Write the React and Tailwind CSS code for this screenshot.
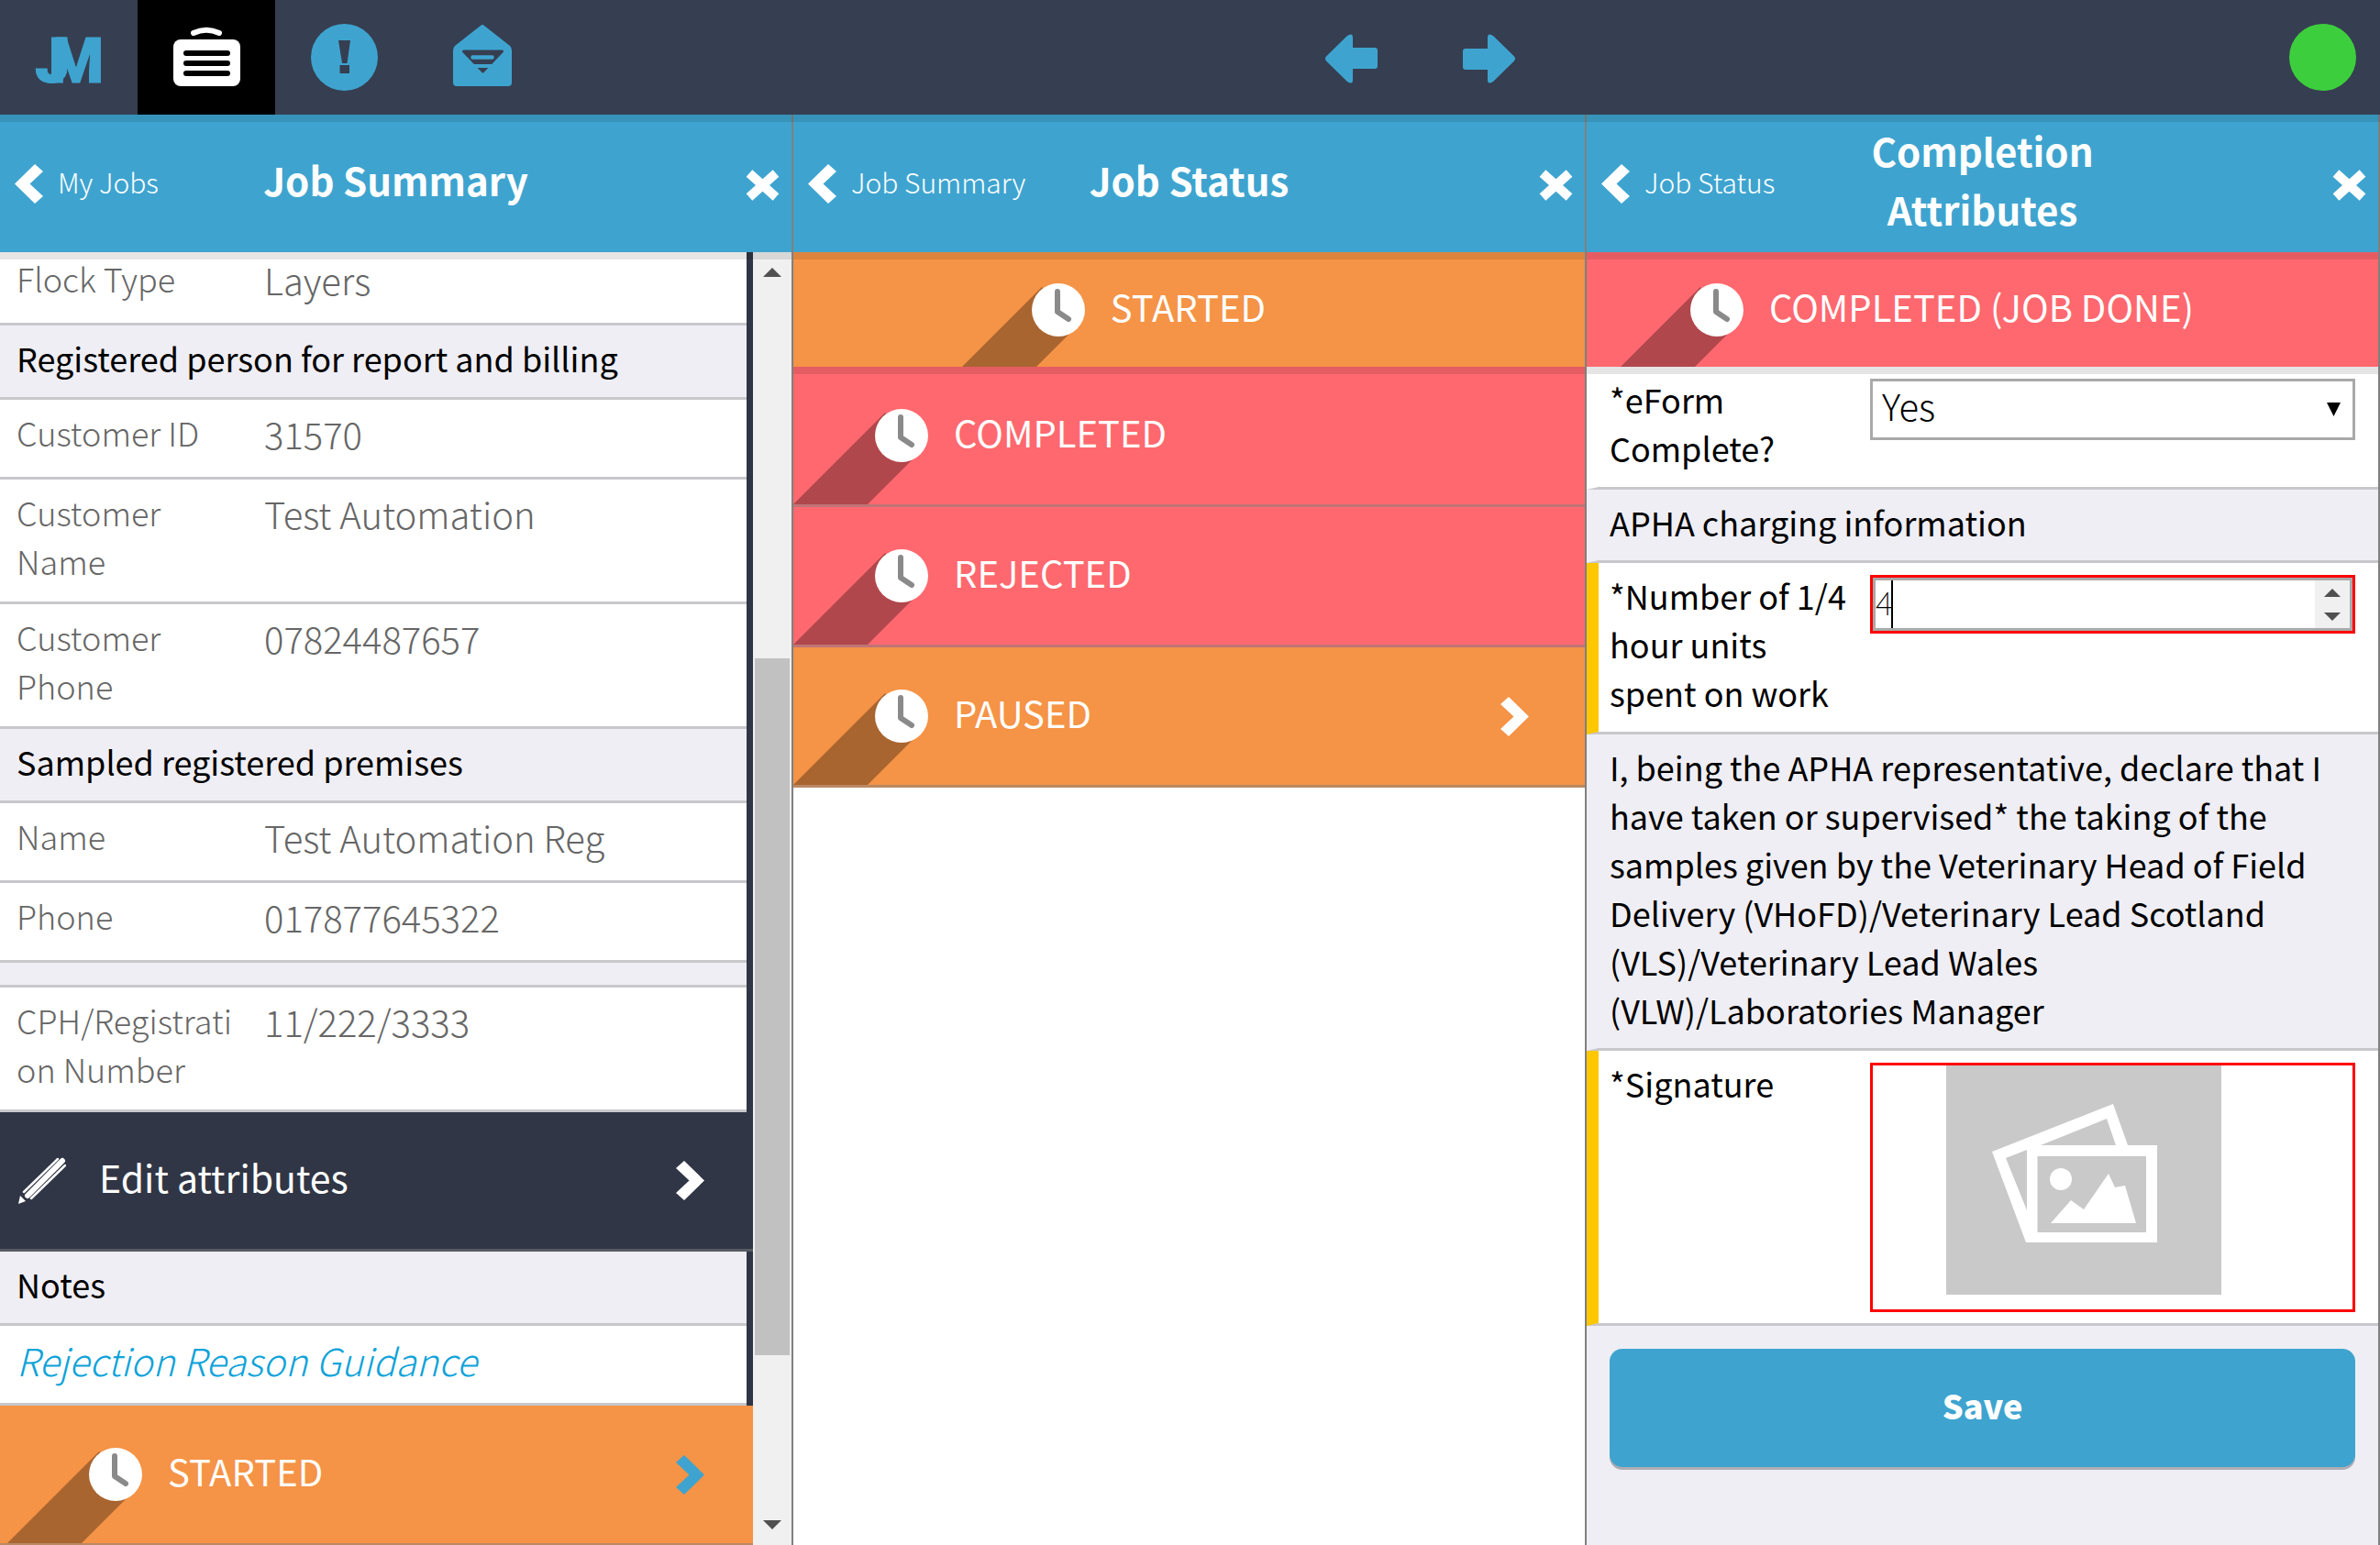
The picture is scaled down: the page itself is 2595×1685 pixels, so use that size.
const raised = "relative shadow-[0_8px_0_rgba(0,0,0,0.1)]";

function Chevron({ className = "" }) {
  return (
    <svg className={"h-[43px] w-[31px] shrink-0 " + className} viewBox="0 0 31 43" fill="currentColor" aria-hidden="true">
      <polygon points="9,0 31,21.5 9,43 0,35 14.5,21.5 0,8" />
    </svg>
  );
}

function ClockIcon() {
  return (
    <svg className="h-[150px] w-[147px] shrink-0" viewBox="-118 -75 147 150" aria-hidden="true">
      <polygon points="-118,75 -18,-25 22,16 -37,75" fill="#000" fillOpacity="0.31" />
      <circle r="29" fill="#fff" />
      <path d="M-1 -20 V2 L11 10" fill="none" stroke="#8a8a8a" strokeWidth="6" strokeLinecap="round" strokeLinejoin="round" />
    </svg>
  );
}

function PencilIcon() {
  return (
    <svg className="h-[52px] w-[52px] shrink-0" viewBox="0 0 52 52" aria-hidden="true">
      <polygon points="0,51 2,42 8,48" fill="#fff" />
      <g stroke="#fff" fill="none" strokeLinecap="round">
        <path d="M6 38 L43 2" strokeWidth="2.5" />
        <path d="M10 42 L48 4" strokeWidth="6" />
        <path d="M14 45 L51 9" strokeWidth="2.5" />
      </g>
    </svg>
  );
}

function PhotoPlaceholder() {
  return (
    <svg className="ml-20 block h-[250px] w-[300px]" viewBox="0 0 300 250" role="img" aria-label="No signature captured">
      <rect width="300" height="250" fill="#c9c9c9" />
      <path
        fill="#fff"
        fillRule="evenodd"
        d="M50 94 L182 42 L198 87 H230 V193 H87 Z M65 101 L88 92 V158 Z M103 87 L175 58 L185 87 Z M99.500 99 H218 V182 H99.500 Z"
      />
      <circle cx="125" cy="124" r="12" fill="#fff" />
      <polygon points="114,172 136,147 150,157 177,118 184,133 195,131 207,172" fill="#fff" />
    </svg>
  );
}

function ArrowIcon({ className = "" }) {
  return (
    <svg className={"h-[54px] w-[57px] " + className} viewBox="0 0 57 54" fill="currentColor">
      <path d="M1 24.500 L24 2 Q30 -2 30 4 V15 H54 Q57 15 57 18 V35 Q57 38 54 38 H30 V50 Q30 56 24 52 L1 29.500 Q-1 27 1 24.500 Z" />
    </svg>
  );
}

function TopBar() {
  const tab = "flex h-full w-[150px] items-center justify-center";
  return (
    <nav className={"z-30 flex h-[125px] shrink-0 items-center bg-[#363e51] text-[#3ea4cf] " + raised}>
      <button className={tab} aria-label="Home">
        <svg className="h-[125px] w-[150px]" viewBox="0 0 150 125" fill="currentColor">
          <text x="38" y="90" fontFamily="Roboto, sans-serif" fontWeight="900" fontSize="69" stroke="currentColor" strokeWidth="1">
            J<tspan dx="-24">M</tspan>
          </text>
        </svg>
      </button>
      <button className={tab + " bg-black text-white"} aria-label="Jobs">
        <svg className="h-[125px] w-[150px]" viewBox="150 0 150 125">
          <rect x="189" y="43" width="73" height="51" rx="8" fill="#fff" />
          <path d="M211 36 Q225 29.500 239 36" fill="none" stroke="#fff" strokeWidth="6" strokeLinecap="round" />
          <path d="M203 58 H248 M203 69 H248 M203 80 H248" stroke="#000" strokeWidth="6" strokeLinecap="round" />
        </svg>
      </button>
      <button className={tab} aria-label="Alerts">
        <svg className="h-[125px] w-[150px]" viewBox="300 0 150 125">
          <circle cx="375.5" cy="62.5" r="36.5" fill="currentColor" />
          <path d="M369 44 H382 L378.500 69 H373 Z M370.500 71 H381 V80 H370.500 Z" fill="#363e51" />
        </svg>
      </button>
      <button className={tab} aria-label="Messages">
        <svg className="h-[125px] w-[150px]" viewBox="450 0 150 125">
          <path d="M524 28 Q526 26 528 28 L556 50 Q558 52 558 55 V90 Q558 94 554 94 H498 Q494 94 494 90 V55 Q494 52 496 50 Z" fill="currentColor" />
          <path d="M505.500 56 H547.500 L526.500 78 Z" fill="#363e51" stroke="#363e51" strokeWidth="3" strokeLinejoin="round" />
          <path d="M515.500 62.500 H536.500" stroke="currentColor" strokeWidth="4.500" strokeLinecap="round" />
          <path d="M514 72 H539" stroke="currentColor" strokeWidth="4" />
        </svg>
      </button>
      <div className="flex h-full flex-1 items-center justify-center pt-[2px]">
        <button className={tab} aria-label="Previous">
          <ArrowIcon />
        </button>
        <button className={tab} aria-label="Next">
          <ArrowIcon className="rotate-180" />
        </button>
      </div>
      <span className="mr-[26px] size-[73px] rounded-full bg-[#3dce3d]" role="status" aria-label="Online" />
    </nav>
  );
}

function PanelHeader({ back, title }) {
  return (
    <header className={"z-20 grid h-[150px] shrink-0 grid-cols-[1fr_2fr_1fr] items-center bg-[#3ea4cf] text-white " + raised}>
      <button className="flex w-0 items-center gap-4 pl-4 text-[30px] font-light whitespace-nowrap">
        <Chevron className="rotate-180" />
        <span className="pb-1">{back}</span>
      </button>
      <h2 className="pb-2 text-center text-[42px] leading-16 font-bold">{title}</h2>
      <button className="mr-[13px] justify-self-end pt-1" aria-label={"Close " + title}>
        <svg className="h-[34px] w-[37px]" viewBox="0 0 37 34" stroke="#fff" strokeWidth="10">
          <path d="M4 4 L33 30 M33 4 L4 30" />
        </svg>
      </button>
    </header>
  );
}

function Panel({ back, title, children, className = "" }) {
  return (
    <section className={"flex min-h-0 min-w-0 flex-1 flex-col border-r-2 border-[#808080] " + className}>
      <PanelHeader back={back} title={title} />
      {children}
    </section>
  );
}

function StatusBanner({ color, children }) {
  return (
    <div className={"z-10 grid h-[125px] shrink-0 grid-cols-[1fr_auto_1fr] items-center gap-7 pr-[2px] text-[40px] text-white " + raised + " " + color}>
      <div className="flex h-[125px] items-center justify-end overflow-hidden">
        <ClockIcon />
      </div>
      <span className="pb-2">{children}</span>
    </div>
  );
}

function StatusRow({ color, chevron, className = "", children }) {
  return (
    <button className={"flex h-[153px] w-full shrink-0 items-center gap-7 border-b-3 border-[#7f7f7f]/50 text-left text-[40px] text-white " + color + " " + className}>
      <ClockIcon />
      <span className="flex-1 pb-2">{children}</span>
      {chevron && <Chevron className={chevron} />}
    </button>
  );
}

function SectionTitle({ children }) {
  return (
    <h3 className="shrink-0 border-b-3 border-[#c8c7cc] bg-[#efeef4] pt-[9px] pr-4 pb-4 pl-[18px] text-[36px] leading-[53px]">{children}</h3>
  );
}

function Detail({ label, value, className = "" }) {
  return (
    <dl className={"flex shrink-0 gap-[30px] border-b-3 border-[#c8c7cc] bg-white pt-[9px] pr-4 pb-[18px] pl-[18px] font-light text-[#666] " + className}>
      <dt className="w-[240px] text-[36px] leading-[53px] wrap-anywhere">{label}</dt>
      <dd className="flex-1 text-[40px] leading-[57px]">{value}</dd>
    </dl>
  );
}

function Scrollbar() {
  return (
    <div className="flex w-[42px] shrink-0 flex-col items-center bg-[#f0f0f0] pt-[17px] pb-[17px]" aria-hidden="true">
      <svg className="h-[10px] w-5" viewBox="0 0 20 10"><polygon points="10,0 20,10 0,10" fill="#505050" /></svg>
      <div className="flex w-full flex-1 flex-col px-[2px] pt-4 pb-4">
        <div className="grow-[400]" />
        <div className="grow-[760] bg-[#c1c1c1]" />
        <div className="grow-[164]" />
      </div>
      <svg className="h-[10px] w-5" viewBox="0 0 20 10"><polygon points="0,0 20,0 10,10" fill="#505050" /></svg>
    </div>
  );
}

const formSection = "shrink-0 border-b-3 border-l-13 border-b-[#c8c7cc] border-l-[#efeef4] bg-[#efeef4] pt-[9px] pr-12 pb-[15px] pl-3 text-[36px] leading-[53px]";

function FormRow({ label, htmlFor, required, children }) {
  return (
    <div className={"flex shrink-0 items-start gap-[26px] border-b-3 border-l-13 border-b-[#c8c7cc] bg-white pt-[9px] pr-[25px] pb-3 pl-3 " + (required ? "border-l-[#ffc700]" : "border-l-white")}>
      <label htmlFor={htmlFor} className="w-[258px] shrink-0 pb-1 text-[36px] leading-[53px]">{label}</label>
      {children}
    </div>
  );
}

export default function App() {
  return (
    <div className="flex h-screen flex-col overflow-hidden bg-white font-['Noto_Sans_CJK_SC',sans-serif] text-black">
      <TopBar />
      <main className="flex min-h-0 flex-1">
        <Panel back="My Jobs" title="Job Summary">
          <div className="flex min-h-0 flex-1">
            <div className="flex min-w-0 flex-1 flex-col overflow-hidden bg-[#303645]">
              <div className="mr-[7px] flex shrink-0 flex-col">
                <Detail label="Flock Type" value="Layers" className="-mt-[7px]" />
                <SectionTitle>Registered person for report and billing</SectionTitle>
                <Detail label="Customer ID" value="31570" />
                <Detail label="Customer Name" value="Test Automation" />
                <Detail label="Customer Phone" value="07824487657" />
                <SectionTitle>Sampled registered premises</SectionTitle>
                <Detail label="Name" value="Test Automation Reg" />
                <Detail label="Phone" value="017877645322" />
                <div className="h-[27px] border-b-3 border-[#c8c7cc] bg-[#efeef4]" />
                <Detail label="CPH/Registration Number" value="11/222/3333" />
              </div>
              <button className="flex h-[152px] shrink-0 items-center gap-9 border-b-3 border-[#7f7f7f]/50 bg-[#303645] pr-[53px] pl-5 text-left text-[41px] text-white">
                <PencilIcon />
                <span className="flex-1 pb-2">Edit attributes</span>
                <Chevron />
              </button>
              <div className="mr-[7px] flex shrink-0 flex-col">
                <SectionTitle>Notes</SectionTitle>
                <a href="#guidance" className="border-b-3 border-[#c8c7cc] bg-white pt-[9px] pb-[18px] pl-[18px] text-[41px] leading-[57px] font-light text-[#0fa3d9] italic">
                  Rejection Reason Guidance
                </a>
              </div>
              <StatusRow color="bg-[#f59346]" chevron="text-[#3ea4cf]" className="pr-[53px] pl-2">STARTED</StatusRow>
            </div>
            <Scrollbar />
          </div>
        </Panel>

        <Panel back="Job Summary" title="Job Status">
          <StatusBanner color="bg-[#f59346]">STARTED</StatusBanner>
          <StatusRow color="bg-[#ff686e]">COMPLETED</StatusRow>
          <StatusRow color="bg-[#ff686e]">REJECTED</StatusRow>
          <StatusRow color="bg-[#f59346]" chevron="text-white" className="pr-[61px]">PAUSED</StatusRow>
        </Panel>

        <Panel back="Job Status" title="Completion Attributes" className="bg-[#efeef4]">
          <StatusBanner color="bg-[#ff686e]">COMPLETED (JOB DONE)</StatusBanner>
          <FormRow label="*eForm Complete?" htmlFor="eform">
            <div className="relative mt-1 flex-1">
              <select id="eform" className="h-[67px] w-full appearance-none border-3 border-[#a9a9a9] bg-white px-[10px] pb-2 text-[40px] leading-[53px] font-light">
                <option>Yes</option>
                <option>No</option>
              </select>
              <svg className="pointer-events-none absolute top-[26px] right-4 h-[15px] w-[15px]" viewBox="0 0 15 15" aria-hidden="true">
                <polygon points="0,0 15,0 7.5,15" />
              </svg>
            </div>
          </FormRow>
          <h3 className={formSection}>APHA charging information</h3>
          <FormRow label="*Number of 1/4 hour units spent on work" htmlFor="units" required>
            <div className="relative mt-1 flex h-16 flex-1 border-3 border-[#ff0000]">
              <input
                id="units"
                type="number"
                defaultValue="4"
                className="min-w-0 flex-1 [appearance:textfield] border-3 border-r-0 border-[#a9a9a9] bg-white pb-2 text-[36px] font-thin outline-none"
              />
              <div className="flex w-[41px] flex-col border-y-3 border-r-3 border-[#a9a9a9] bg-[#f0f0f0]">
                <button className="flex flex-1 items-center justify-center" aria-label="Increase">
                  <svg className="h-[9px] w-[18px]" viewBox="0 0 18 9"><polygon points="9,0 18,9 0,9" fill="#505050" /></svg>
                </button>
                <button className="flex flex-1 items-center justify-center" aria-label="Decrease">
                  <svg className="h-[9px] w-[18px]" viewBox="0 0 18 9"><polygon points="0,0 18,0 9,9" fill="#505050" /></svg>
                </button>
              </div>
              <span className="absolute top-[3px] bottom-[3px] left-5 w-[2px] bg-black" aria-hidden="true" />
            </div>
          </FormRow>
          <p className={formSection}>
            I, being the APHA representative, declare that I have taken or supervised* the taking of the samples given by the Veterinary Head of Field Delivery (VHoFD)/Veterinary Lead Scotland (VLS)/Veterinary Lead Wales (VLW)/Laboratories Manager
          </p>
          <FormRow label="*Signature" htmlFor="signature" required>
            <button id="signature" className="mt-1 block flex-1 border-3 border-[#ff0000] bg-white pb-4">
              <PhotoPlaceholder />
            </button>
          </FormRow>
          <div className="p-[25px]">
            <button className="h-[129px] w-full rounded-[14px] bg-[#3ea4cf] pb-2 text-[36px] font-black text-white shadow-[0_3px_0_#aeadb3]">Save</button>
          </div>
        </Panel>
      </main>
    </div>
  );
}
